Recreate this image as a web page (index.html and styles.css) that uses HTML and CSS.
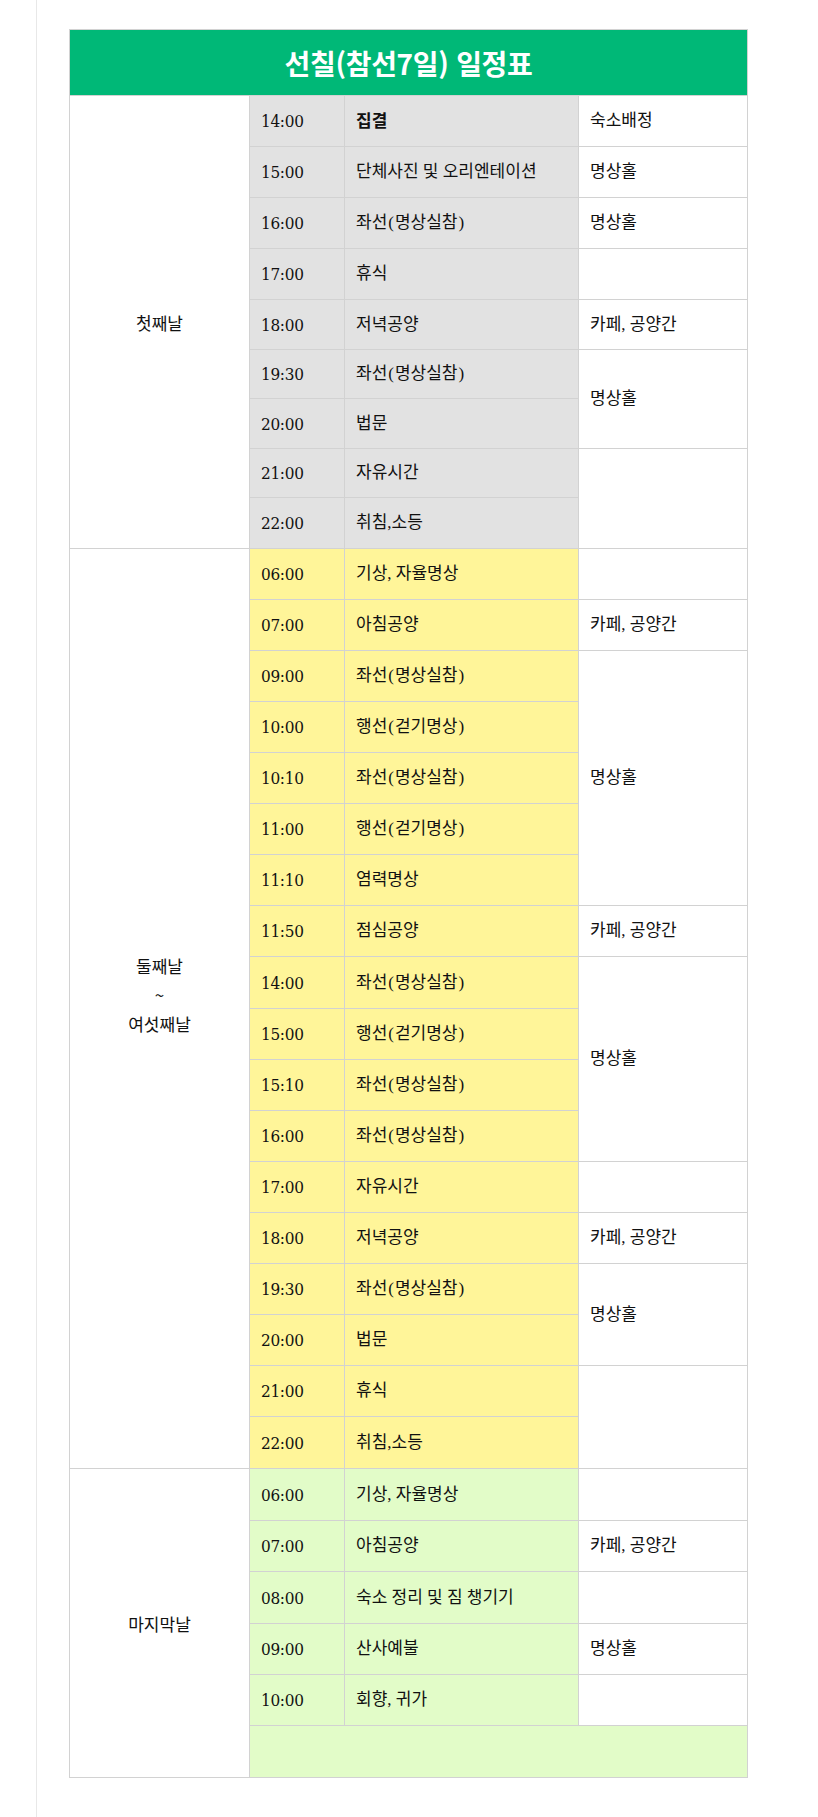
FILE: index.html
```html
<!DOCTYPE html>
<html lang="ko">
<head>
<meta charset="utf-8">
<title>선칠(참선7일) 일정표</title>
<link rel="stylesheet" href="styles.css">
</head>
<body>
<div class="page">
  <table class="schedule">
    <colgroup>
      <col class="c-day"><col class="c-time"><col class="c-act"><col class="c-place">
    </colgroup>
    <thead>
      <tr><th colspan="4" class="title">선칠(참선7일) 일정표</th></tr>
    </thead>
    <tbody class="d1">
      <tr><td rowspan="9" class="day">첫째날</td><td class="time">14:00</td><td class="act"><b>집결</b></td><td class="place">숙소배정</td></tr>
      <tr><td class="time">15:00</td><td class="act">단체사진 및 오리엔테이션</td><td class="place">명상홀</td></tr>
      <tr><td class="time">16:00</td><td class="act">좌선<span class="p">(</span>명상실참<span class="p">)</span></td><td class="place">명상홀</td></tr>
      <tr><td class="time">17:00</td><td class="act">휴식</td><td class="place"></td></tr>
      <tr class="h50"><td class="time">18:00</td><td class="act">저녁공양</td><td class="place">카페, 공양간</td></tr>
      <tr class="h49"><td class="time">19:30</td><td class="act">좌선<span class="p">(</span>명상실참<span class="p">)</span></td><td class="place" rowspan="2">명상홀</td></tr>
      <tr class="h50"><td class="time">20:00</td><td class="act">법문</td></tr>
      <tr class="h49"><td class="time">21:00</td><td class="act">자유시간</td><td class="place" rowspan="2"></td></tr>
      <tr><td class="time">22:00</td><td class="act">취침,소등</td></tr>
    </tbody>
    <tbody class="d2">
      <tr><td rowspan="18" class="day">둘째날<br>~<br>여섯째날<br>&nbsp;</td><td class="time">06:00</td><td class="act">기상, 자율명상</td><td class="place"></td></tr>
      <tr><td class="time">07:00</td><td class="act">아침공양</td><td class="place">카페, 공양간</td></tr>
      <tr><td class="time">09:00</td><td class="act">좌선<span class="p">(</span>명상실참<span class="p">)</span></td><td class="place" rowspan="5">명상홀</td></tr>
      <tr><td class="time">10:00</td><td class="act">행선<span class="p">(</span>걷기명상<span class="p">)</span></td></tr>
      <tr><td class="time">10:10</td><td class="act">좌선<span class="p">(</span>명상실참<span class="p">)</span></td></tr>
      <tr><td class="time">11:00</td><td class="act">행선<span class="p">(</span>걷기명상<span class="p">)</span></td></tr>
      <tr><td class="time">11:10</td><td class="act">염력명상</td></tr>
      <tr><td class="time">11:50</td><td class="act">점심공양</td><td class="place">카페, 공양간</td></tr>
      <tr class="h52"><td class="time">14:00</td><td class="act">좌선<span class="p">(</span>명상실참<span class="p">)</span></td><td class="place" rowspan="4">명상홀</td></tr>
      <tr><td class="time">15:00</td><td class="act">행선<span class="p">(</span>걷기명상<span class="p">)</span></td></tr>
      <tr><td class="time">15:10</td><td class="act">좌선<span class="p">(</span>명상실참<span class="p">)</span></td></tr>
      <tr><td class="time">16:00</td><td class="act">좌선<span class="p">(</span>명상실참<span class="p">)</span></td></tr>
      <tr><td class="time">17:00</td><td class="act">자유시간</td><td class="place"></td></tr>
      <tr><td class="time">18:00</td><td class="act">저녁공양</td><td class="place">카페, 공양간</td></tr>
      <tr><td class="time">19:30</td><td class="act">좌선<span class="p">(</span>명상실참<span class="p">)</span></td><td class="place" rowspan="2">명상홀</td></tr>
      <tr><td class="time">20:00</td><td class="act">법문</td></tr>
      <tr><td class="time">21:00</td><td class="act">휴식</td><td class="place" rowspan="2"></td></tr>
      <tr class="h52"><td class="time">22:00</td><td class="act">취침,소등</td></tr>
    </tbody>
    <tbody class="d3">
      <tr class="h52"><td rowspan="6" class="day">마지막날</td><td class="time">06:00</td><td class="act">기상, 자율명상</td><td class="place"></td></tr>
      <tr><td class="time">07:00</td><td class="act">아침공양</td><td class="place">카페, 공양간</td></tr>
      <tr class="h52"><td class="time">08:00</td><td class="act">숙소 정리 및 짐 챙기기</td><td class="place"></td></tr>
      <tr><td class="time">09:00</td><td class="act">산사예불</td><td class="place">명상홀</td></tr>
      <tr><td class="time">10:00</td><td class="act">회향, 귀가</td><td class="place"></td></tr>
      <tr class="h52"><td class="time filler" colspan="3"></td></tr>
    </tbody>
  </table>
</div>
</body>
</html>
```

FILE: styles.css
```css
html, body {
  margin: 0;
  padding: 0;
  background: #ffffff;
}

.page {
  margin-left: 36px;
  border-left: 1px solid #e8e8e8;
  min-height: 1817px;
  box-sizing: border-box;
  padding: 29px 0 0 32px;
}

.schedule {
  width: 678px;
  table-layout: fixed;
  border-collapse: separate;
  border-spacing: 0;
  border-top: 1px solid #d2d2d2;
  border-left: 1px solid #d2d2d2;
  font-family: "Liberation Serif", "Noto Sans CJK KR", serif;
  font-size: 17px;
  color: #111111;
}

.c-day { width: 180px; }
.c-time { width: 95px; }
.c-act { width: 234px; }
.c-place { width: 169px; }

.schedule th,
.schedule td {
  border-right: 1px solid #d2d2d2;
  border-bottom: 1px solid #d2d2d2;
  padding: 0 11px;
  text-align: left;
  vertical-align: middle;
  line-height: 22px;
}

.schedule tbody tr { height: 51px; }
.schedule tbody tr.h49 { height: 49px; }
.schedule tbody tr.h50 { height: 50px; }
.schedule tbody tr.h52 { height: 52px; }

.schedule .title {
  height: 66px;
  box-sizing: border-box;
  background: #00b877;
  color: #ffffff;
  text-align: center;
  font-family: "Noto Sans CJK KR", sans-serif;
  font-weight: bold;
  font-size: 28px;
  letter-spacing: -0.3px;
  padding: 0;
}

.schedule .time {
  font-family: "DejaVu Serif", "Liberation Serif", serif;
  font-stretch: condensed;
  font-size: 17px;
  letter-spacing: -0.3px;
}

.schedule .act .p {
  padding: 0 1px;
}

.schedule .day {
  background: #ffffff;
  text-align: center;
  font-family: "Noto Sans CJK KR", sans-serif;
  font-size: 17px;
  line-height: 29px;
}

.schedule .place {
  background: #ffffff;
}

.schedule .act b {
  font-family: "Noto Sans CJK KR", sans-serif;
  font-weight: bold;
}

.d1 .time, .d1 .act { background: #e2e2e2; }
.d2 .time, .d2 .act { background: #fff599; }
.d3 .time, .d3 .act { background: #e2fcc8; }
```
